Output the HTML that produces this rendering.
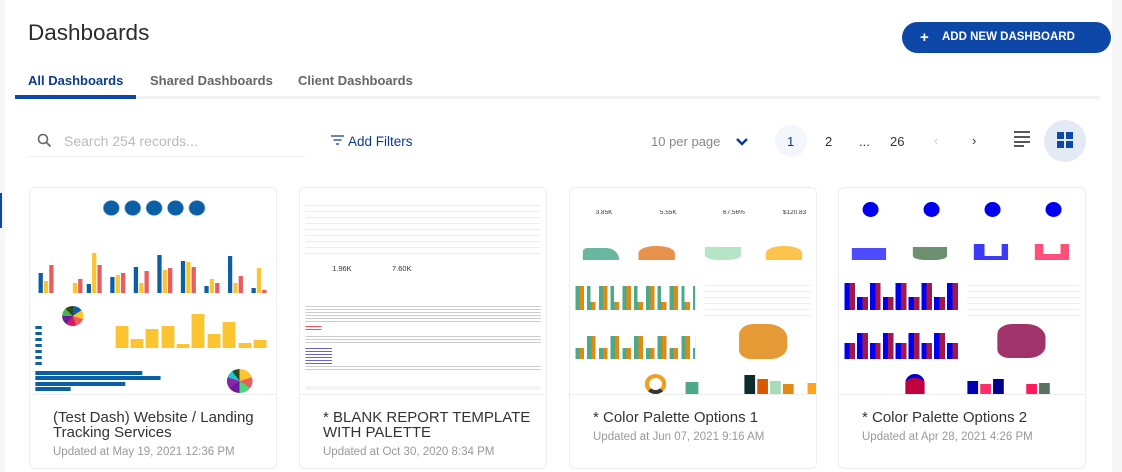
<!DOCTYPE html>
<html><head><meta charset="utf-8"><style>
*{box-sizing:border-box;margin:0;padding:0}
body{width:1122px;height:472px;overflow:hidden;background:#fff;font-family:"Liberation Sans",sans-serif;position:relative;color:#333}
.a{position:absolute}
.card{position:absolute;top:187px;width:248px;height:282px;border:1px solid #eee;border-radius:6px;background:#fff;overflow:hidden}
.th{position:absolute;left:0;top:0;width:248px;height:207px;background:#fff;border-bottom:1px solid #eee;overflow:hidden}
.in{position:absolute;left:0;top:0;width:231px;height:207px;transform:scaleX(1.07);transform-origin:0 0}
.t{position:absolute;left:23px;top:222px;font-size:15px;color:#333;line-height:15px;width:220px}
.u{position:absolute;left:23px;font-size:11.5px;color:#999}
.b{position:absolute;bottom:0}
</style></head><body>
<div class="a" style="left:0;top:0;width:5px;height:472px;background:#f7f7f7"></div>
<div class="a" style="left:0;top:193px;width:2px;height:35px;background:#0d47a1"></div>
<div class="a" style="left:1112px;top:0;width:10px;height:472px;background:#f7f7f7"></div>
<div class="a" style="left:28px;top:20px;font-size:22.5px;color:#2b2b2b">Dashboards</div>
<div class="a" style="left:902px;top:22px;width:209px;height:31px;border-radius:16px;background:#0d47a8;color:#fff;font-size:11.5px;font-weight:bold;line-height:31px"><span style="position:absolute;left:18px;font-size:15px">+</span><span style="position:absolute;left:40px">ADD NEW DASHBOARD</span></div>
<div class="a" style="left:15px;top:96px;width:1085px;height:3px;background:#f3f3f3"></div>
<div class="a" style="left:15px;top:95px;width:121px;height:4px;background:#0d47a8"></div>
<div class="a" style="left:28px;top:73px;font-size:13px;font-weight:bold;color:#0d3a8f">All Dashboards</div>
<div class="a" style="left:150px;top:73px;font-size:13px;font-weight:bold;color:#666">Shared Dashboards</div>
<div class="a" style="left:298px;top:73px;font-size:13px;font-weight:bold;color:#666">Client Dashboards</div>
<svg class="a" style="left:37px;top:133px" width="15" height="15"><circle cx="6" cy="6" r="4.5" fill="none" stroke="#666" stroke-width="1.6"/><path d="M9.5 9.5L13.5 13.5" stroke="#666" stroke-width="1.8"/></svg>
<div class="a" style="left:64px;top:133px;font-size:14px;color:#bbb">Search 254 records...</div>
<div class="a" style="left:27px;top:156px;width:278px;height:1px;background:#f0f0f0"></div>
<svg class="a" style="left:331px;top:135px" width="13" height="10"><path d="M0 1H13M2.5 5H10.5M5 9H8" stroke="#0d3a8f" stroke-width="1.3"/></svg>
<div class="a" style="left:348px;top:134px;font-size:13.5px;color:#0d3a8f">Add Filters</div>
<div class="a" style="left:651px;top:134px;font-size:13px;color:#888">10 per page</div>
<svg class="a" style="left:736px;top:137px" width="12" height="9"><path d="M1 2L6 7L11 2" fill="none" stroke="#0d3a8f" stroke-width="2.4"/></svg>
<div class="a" style="left:775px;top:125px;width:32px;height:32px;border-radius:50%;background:#f3f6fb"></div>
<div class="a" style="left:787px;top:134px;font-size:13px;color:#0d3a8f">1</div>
<div class="a" style="left:825px;top:134px;font-size:13px;color:#333">2</div>
<div class="a" style="left:859px;top:134px;font-size:13px;color:#333">...</div>
<div class="a" style="left:890px;top:134px;font-size:13px;color:#333">26</div>
<div class="a" style="left:934px;top:133px;font-size:13px;color:#ccc">‹</div>
<div class="a" style="left:972px;top:133px;font-size:13px;color:#333">›</div>
<svg class="a" style="left:1014px;top:131px" width="17" height="16"><path d="M0 1H16M0 6H16M0 11H16M0 15H10" stroke="#222" stroke-width="1.5"/></svg>
<div class="a" style="left:1044px;top:120px;width:42px;height:42px;border-radius:50%;background:#e4eaf4"></div>
<div class="a" style="left:1057px;top:132px;width:7px;height:7px;background:#0d47a8"></div>
<div class="a" style="left:1066px;top:132px;width:7px;height:7px;background:#0d47a8"></div>
<div class="a" style="left:1057px;top:141px;width:7px;height:7px;background:#0d47a8"></div>
<div class="a" style="left:1066px;top:141px;width:7px;height:7px;background:#0d47a8"></div>

<div class="card" style="left:29px">
 <div class="th"><div class="in">
  <div class="a" style="left:68px;top:12px;width:96px;height:16px;background:radial-gradient(circle at 8px 8px,#0b5fa5 7px,transparent 8px) 0 0/20px 16px repeat-x"></div>
  <div class="a" style="left:5px;top:50px;width:220px;height:55px">
   <div class="b" style="left:3px;height:20px;width:4px;background:#0b5fa5"></div><div class="b" style="left:8px;height:12px;width:4px;background:#fbc531"></div><div class="b" style="left:13px;height:28px;width:4px;background:#e85d5d"></div>
   <div class="b" style="left:35px;height:10px;width:4px;background:#fbc531"></div><div class="b" style="left:40px;height:14px;width:4px;background:#e85d5d"></div>
   <div class="b" style="left:48px;height:9px;width:4px;background:#0b5fa5"></div><div class="b" style="left:53px;height:40px;width:4px;background:#fbc531"></div><div class="b" style="left:58px;height:28px;width:4px;background:#e85d5d"></div>
   <div class="b" style="left:70px;height:16px;width:4px;background:#0b5fa5"></div><div class="b" style="left:75px;height:18px;width:4px;background:#fbc531"></div><div class="b" style="left:80px;height:20px;width:4px;background:#e85d5d"></div>
   <div class="b" style="left:92px;height:26px;width:4px;background:#0b5fa5"></div><div class="b" style="left:97px;height:10px;width:4px;background:#fbc531"></div><div class="b" style="left:102px;height:22px;width:4px;background:#e85d5d"></div>
   <div class="b" style="left:114px;height:38px;width:4px;background:#0b5fa5"></div><div class="b" style="left:119px;height:23px;width:4px;background:#fbc531"></div><div class="b" style="left:124px;height:25px;width:4px;background:#e85d5d"></div>
   <div class="b" style="left:136px;height:32px;width:4px;background:#0b5fa5"></div><div class="b" style="left:141px;height:31px;width:4px;background:#fbc531"></div><div class="b" style="left:146px;height:26px;width:4px;background:#e85d5d"></div>
   <div class="b" style="left:158px;height:7px;width:4px;background:#0b5fa5"></div><div class="b" style="left:163px;height:14px;width:4px;background:#fbc531"></div><div class="b" style="left:168px;height:10px;width:4px;background:#e85d5d"></div>
   <div class="b" style="left:180px;height:37px;width:4px;background:#0b5fa5"></div><div class="b" style="left:185px;height:10px;width:4px;background:#fbc531"></div><div class="b" style="left:190px;height:17px;width:4px;background:#e85d5d"></div>
   <div class="b" style="left:202px;height:5px;width:4px;background:#0b5fa5"></div><div class="b" style="left:207px;height:25px;width:4px;background:#fbc531"></div><div class="b" style="left:212px;height:3px;width:4px;background:#e85d5d"></div>
  </div>
  <div class="a" style="left:30px;top:118px;width:20px;height:20px;border-radius:50%;background:conic-gradient(#0b5fa5 0 15%,#fbc531 0 30%,#e85d5d 0 45%,#d81b60 0 60%,#6a1b9a 0 75%,#4caf50 0 88%,#2e4a1a 0)"></div>
  <div class="a" style="left:5px;top:138px;width:6px;height:40px;background:repeating-linear-gradient(#0b5fa5 0 3px,#fff 3px 6px)"></div>
  <div class="a" style="left:78px;top:125px;width:145px;height:35px">
   <div class="b" style="left:2px;height:22px;width:12px;background:#fbc531"></div><div class="b" style="left:16px;height:9px;width:12px;background:#fbc531"></div><div class="b" style="left:30px;height:19px;width:12px;background:#fbc531"></div><div class="b" style="left:45px;height:22px;width:12px;background:#fbc531"></div><div class="b" style="left:59px;height:4px;width:12px;background:#fbc531"></div><div class="b" style="left:73px;height:34px;width:12px;background:#fbc531"></div><div class="b" style="left:88px;height:14px;width:12px;background:#fbc531"></div><div class="b" style="left:102px;height:26px;width:12px;background:#fbc531"></div><div class="b" style="left:117px;height:5px;width:12px;background:#fbc531"></div><div class="b" style="left:131px;height:8px;width:12px;background:#fbc531"></div>
  </div>
  <div class="a" style="left:5px;top:183px;width:100px;height:4px;background:#0b5fa5"></div>
  <div class="a" style="left:5px;top:188px;width:117px;height:4px;background:#0b5fa5"></div>
  <div class="a" style="left:5px;top:194px;width:84px;height:4px;background:#0b5fa5"></div>
  <div class="a" style="left:5px;top:199px;width:33px;height:4px;background:#0b5fa5"></div>
  <div class="a" style="left:184px;top:181px;width:24px;height:24px;border-radius:50%;background:conic-gradient(#fbc531 0 20%,#e85d5d 0 35%,#4cd67a 0 50%,#6a1b9a 0 65%,#8e24aa 0 80%,#1cc7d0 0 90%,#2e4a1a 0)"></div>
 </div></div>
 <div class="t">(Test Dash) Website / Landing Tracking Services</div>
 <div class="u" style="top:258px">Updated at May 19, 2021 12:36 PM</div>
</div>

<div class="card" style="left:299px">
 <div class="th"><div class="in">
  <div class="a" style="left:5px;top:12px;width:220px;height:58px;background:repeating-linear-gradient(#fff 0 5px,#eee 5px 6px)"></div>
  <div class="a" style="left:30px;top:78px;font-size:7px">1.96K</div>
  <div class="a" style="left:86px;top:78px;font-size:7px">7.60K</div>
  <div class="a" style="left:5px;top:118px;width:220px;height:16px;background:repeating-linear-gradient(#ccc 0 1px,#fff 1px 3px)"></div>
  <div class="a" style="left:5px;top:138px;width:15px;height:6px;background:repeating-linear-gradient(#e55 0 1px,#fff 1px 3px)"></div>
  <div class="a" style="left:5px;top:148px;width:220px;height:8px;background:repeating-linear-gradient(#ccc 0 1px,#fff 1px 3px)"></div>
  <div class="a" style="left:5px;top:160px;width:25px;height:18px;background:repeating-linear-gradient(#66c 0 1px,#fff 1px 3px)"></div>
  <div class="a" style="left:5px;top:178px;width:220px;height:5px;background:repeating-linear-gradient(#ccc 0 1px,#fff 1px 3px)"></div>
  <div class="a" style="left:5px;top:198px;width:220px;height:4px;background:#f3f3f3"></div>
 </div></div>
 <div class="t">* BLANK REPORT TEMPLATE WITH PALETTE</div>
 <div class="u" style="top:258px">Updated at Oct 30, 2020 8:34 PM</div>
</div>

<div class="card" style="left:569px">
 <div class="th"><div class="in">
  <div class="a" style="left:24px;top:22px;font-size:6px">3.85K</div><div class="a" style="left:84px;top:22px;font-size:6px">5.55K</div><div class="a" style="left:143px;top:22px;font-size:6px">67.56%</div><div class="a" style="left:199px;top:22px;font-size:6px">$120.83</div>
  <div class="a" style="left:12px;top:60px;width:34px;height:12px;background:#6ab7a0;border-radius:10px 30px 0 0"></div>
  <div class="a" style="left:64px;top:58px;width:34px;height:14px;background:#e6924a;border-radius:50% 50% 0 0"></div>
  <div class="a" style="left:126px;top:59px;width:34px;height:13px;background:#b5e4c7;border-radius:0 0 40% 40%/0 0 5px 5px"></div>
  <div class="a" style="left:183px;top:58px;width:34px;height:14px;background:#fcc44c;border-radius:50% 50% 0 0"></div>
  <div class="a" style="left:5px;top:98px;width:112px;height:24px;background:repeating-linear-gradient(90deg,#4fa887 0 4px,#e08a14 4px 8px,#fff 8px 11px)"></div>
  <div class="a" style="left:5px;top:98px;width:112px;height:16px;background:repeating-linear-gradient(90deg,transparent 0 14px,#fff 14px 22px)"></div>
  <div class="a" style="left:125px;top:92px;width:100px;height:40px;background:repeating-linear-gradient(#fff 0 5px,#eee 5px 6px)"></div>
  <div class="a" style="left:5px;top:148px;width:112px;height:23px;background:repeating-linear-gradient(90deg,#4fa887 0 4px,#e08a14 4px 8px,#fff 8px 11px)"></div>
  <div class="a" style="left:5px;top:148px;width:112px;height:12px;background:repeating-linear-gradient(90deg,#fff 0 10px,transparent 10px 22px)"></div>
  <div class="a" style="left:158px;top:136px;width:45px;height:35px;background:#e69a35;border-radius:30% 40% 35% 25%"></div>
  <div class="a" style="left:70px;top:186px;width:20px;height:20px;border-radius:50%;border:4px solid #f0a020;border-bottom-color:#333"></div>
  <div class="a" style="left:108px;top:194px;width:12px;height:13px;background:#4fa887"></div>
  <div class="a" style="left:163px;top:187px;width:10px;height:20px;background:#0e2a2a"></div>
  <div class="a" style="left:175px;top:191px;width:10px;height:16px;background:#d55a00"></div>
  <div class="a" style="left:187px;top:193px;width:10px;height:14px;background:#a8dcb8"></div>
  <div class="a" style="left:199px;top:196px;width:10px;height:11px;background:#e08a14"></div>
  <div class="a" style="left:222px;top:195px;width:9px;height:12px;background:#ffa41c"></div>
 </div></div>
 <div class="t">* Color Palette Options 1</div>
 <div class="u" style="top:243px">Updated at Jun 07, 2021 9:16 AM</div>
</div>

<div class="card" style="left:838px">
 <div class="th"><div class="in">
  <div class="a" style="left:22px;top:14px;width:15px;height:15px;border-radius:50%;background:#0000ee"></div>
  <div class="a" style="left:79px;top:14px;width:15px;height:15px;border-radius:50%;background:#0000ee"></div>
  <div class="a" style="left:136px;top:14px;width:15px;height:15px;border-radius:50%;background:#0000ee"></div>
  <div class="a" style="left:193px;top:14px;width:15px;height:15px;border-radius:50%;background:#0000ee"></div>
  <div class="a" style="left:12px;top:60px;width:32px;height:12px;background:#4d4dff"></div>
  <div class="a" style="left:69px;top:59px;width:32px;height:13px;background:#6b8f6f;border-radius:0 0 40% 40%/0 0 4px 4px"></div>
  <div class="a" style="left:126px;top:56px;width:32px;height:16px;background:linear-gradient(#fff,#fff) 10px 0/16px 12px no-repeat,#3b3bf5"></div>
  <div class="a" style="left:183px;top:56px;width:32px;height:16px;background:linear-gradient(#fff,#fff) 8px 0/16px 10px no-repeat,#ff4f7b"></div>
  <div class="a" style="left:5px;top:95px;width:108px;height:27px;background:repeating-linear-gradient(90deg,#0000ee 0 5px,#a3174a 5px 10px,#fff 10px 12px)"></div>
  <div class="a" style="left:5px;top:95px;width:108px;height:14px;background:repeating-linear-gradient(90deg,transparent 0 12px,#fff 12px 24px)"></div>
  <div class="a" style="left:120px;top:92px;width:105px;height:40px;background:repeating-linear-gradient(#fff 0 5px,#eee 5px 6px)"></div>
  <div class="a" style="left:5px;top:145px;width:108px;height:26px;background:repeating-linear-gradient(90deg,#0000ee 0 5px,#a3174a 5px 10px,#fff 10px 12px)"></div>
  <div class="a" style="left:5px;top:145px;width:108px;height:10px;background:repeating-linear-gradient(90deg,#fff 0 10px,transparent 10px 24px)"></div>
  <div class="a" style="left:148px;top:136px;width:45px;height:34px;background:#a0336a;border-radius:30% 40% 35% 25%"></div>
  <div class="a" style="left:62px;top:186px;width:18px;height:21px;border-radius:9px 9px 0 0;background:#c00040;border-top:4px solid #0000cc"></div>
  <div class="a" style="left:120px;top:193px;width:10px;height:14px;background:#0000b3"></div>
  <div class="a" style="left:132px;top:196px;width:10px;height:11px;background:#ff2e6b"></div>
  <div class="a" style="left:144px;top:191px;width:10px;height:16px;background:#00008b"></div>
  <div class="a" style="left:175px;top:196px;width:10px;height:11px;background:#ff1a5c"></div>
  <div class="a" style="left:187px;top:195px;width:10px;height:12px;background:#5a7060"></div>
 </div></div>
 <div class="t">* Color Palette Options 2</div>
 <div class="u" style="top:243px">Updated at Apr 28, 2021 4:26 PM</div>
</div>
</body></html>
